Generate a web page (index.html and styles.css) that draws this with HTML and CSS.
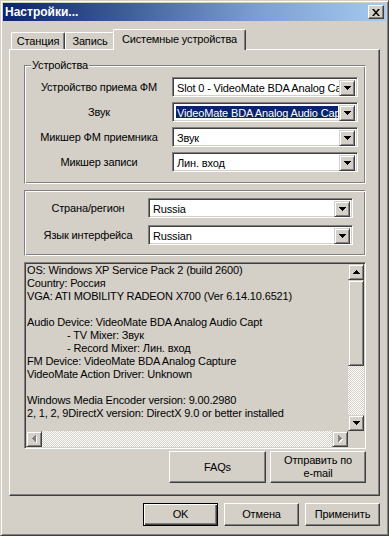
FILE: index.html
```html
<!DOCTYPE html>
<html lang="ru">
<head>
  <meta charset="UTF-8">
  <meta name="viewport" content="width=device-width, initial-scale=1.0">
  <title>Настройки...</title>
  <link rel="stylesheet" href="styles.css">
</head>
<body>

  <div class="window">
    <div class="titlebar">
      <span class="title">Настройки...</span>
      <button class="close" type="button">
        <svg width="8" height="7" viewBox="0 0 8 7"><path d="M0 0h2l2 2.5L6 0h2L5 3.5 8 7H6L4 4.5 2 7H0l3-3.5z" fill="#000"/></svg>
      </button>
    </div>

    <div class="client">
      <div class="tabs">
        <div class="tab tab-station">Станция</div>
        <div class="tab tab-record">Запись</div>
        <div class="tab tab-system active">Системные устройства</div>
      </div>

      <div class="panel">
        <!-- Devices -->
        <div class="group devices">
          <span class="legend">Устройства</span>
          <div class="row">
            <label>Устройство приема ФМ</label>
            <div class="combo"><span class="value">Slot 0 - VideoMate BDA Analog Capture</span><span class="drop"><svg width="7" height="4" viewBox="0 0 7 4"><path d="M0 0h7v1H6v1H5v1H4v1H3V3H2V2H1V1H0z"/></svg></span></div>
          </div>
          <div class="row">
            <label>Звук</label>
            <div class="combo"><span class="value"><span class="selected">VideoMate BDA Analog Audio Capture</span></span><span class="drop"><svg width="7" height="4" viewBox="0 0 7 4"><path d="M0 0h7v1H6v1H5v1H4v1H3V3H2V2H1V1H0z"/></svg></span></div>
          </div>
          <div class="row">
            <label>Микшер ФМ приемника</label>
            <div class="combo"><span class="value">Звук</span><span class="drop"><svg width="7" height="4" viewBox="0 0 7 4"><path d="M0 0h7v1H6v1H5v1H4v1H3V3H2V2H1V1H0z"/></svg></span></div>
          </div>
          <div class="row">
            <label>Микшер записи</label>
            <div class="combo"><span class="value">Лин. вход</span><span class="drop"><svg width="7" height="4" viewBox="0 0 7 4"><path d="M0 0h7v1H6v1H5v1H4v1H3V3H2V2H1V1H0z"/></svg></span></div>
          </div>
        </div>

        <!-- Region -->
        <div class="group region">
          <div class="row">
            <label>Страна/регион</label>
            <div class="combo"><span class="value">Russia</span><span class="drop"><svg width="7" height="4" viewBox="0 0 7 4"><path d="M0 0h7v1H6v1H5v1H4v1H3V3H2V2H1V1H0z"/></svg></span></div>
          </div>
          <div class="row">
            <label>Язык интерфейса</label>
            <div class="combo"><span class="value">Russian</span><span class="drop"><svg width="7" height="4" viewBox="0 0 7 4"><path d="M0 0h7v1H6v1H5v1H4v1H3V3H2V2H1V1H0z"/></svg></span></div>
          </div>
        </div>

        <!-- System info -->
        <div class="info">
          <div class="info-text">
            <div>OS: Windows XP Service Pack 2 (build 2600)</div>
            <div>Country: Россия</div>
            <div>VGA: ATI MOBILITY RADEON X700 (Ver 6.14.10.6521)</div>
            <div>&nbsp;</div>
            <div>Audio Device: VideoMate BDA Analog Audio Capt</div>
            <div class="indent">- TV Mixer: Звук</div>
            <div class="indent">- Record Mixer: Лин. вход</div>
            <div>FM Device: VideoMate BDA Analog Capture</div>
            <div>VideoMate Action Driver: Unknown</div>
            <div>&nbsp;</div>
            <div>Windows Media Encoder version: 9.00.2980</div>
            <div>2, 1, 2, 9DirectX version: DirectX 9.0 or better installed</div>
          </div>
          <div class="vscroll">
            <span class="sb-btn"><svg width="7" height="4" viewBox="0 0 7 4"><path d="M3 0h1v1h1v1h1v1h1v1H0V3h1V2h1V1h1z"/></svg></span>
            <span class="sb-thumb"></span>
            <span class="sb-track"></span>
            <span class="sb-btn"><svg width="7" height="4" viewBox="0 0 7 4"><path d="M0 0h7v1H6v1H5v1H4v1H3V3H2V2H1V1H0z"/></svg></span>
          </div>
          <div class="hscroll">
            <span class="sb-btn disabled"><svg width="5" height="8" viewBox="0 0 5 8"><path d="M4 1h1v7H4V7H3V6H2V5H1V4h1V3h1V2h1z" fill="#fff"/><path d="M3 0h1v7H3V6H2V5H1V4H0V3h1V2h1V1h1z" fill="#808080"/></svg></span>
            <span class="sb-track"></span>
            <span class="sb-btn disabled"><svg width="5" height="8" viewBox="0 0 5 8"><path d="M1 1h1v1h1v1h1v1h1v1H4v1H3v1H2v1H1z" fill="#fff"/><path d="M0 0h1v1h1v1h1v1h1v1H3v1H2v1H1v1H0z" fill="#808080"/></svg></span>
          </div>
          <div class="corner"></div>
        </div>

        <div class="actions">
          <button class="btn faq" type="button">FAQs</button>
          <button class="btn mail" type="button">Отправить по<br>e-mail</button>
        </div>
      </div>

      <div class="buttons">
        <button class="btn default" type="button">OK</button>
        <button class="btn" type="button">Отмена</button>
        <button class="btn" type="button">Применить</button>
      </div>
    </div>
  </div>

</body>
</html>
```

FILE: styles.css
```css
/* General Styles */
* {
  margin: 0;
  padding: 0;
  box-sizing: border-box;
}

body {
  background-color: #d4d0c8;
  font-family: "Liberation Sans", Arial, sans-serif;
  font-size: 11px;
  letter-spacing: -0.15px;
  color: #000;
}

button {
  font-family: inherit;
  font-size: 11px;
  letter-spacing: inherit;
  color: #000;
  background-color: #d4d0c8;
}

/* Window frame */
.window {
  width: 389px;
  height: 536px;
  border: 1px solid;
  border-color: #d4d0c8 #404040 #404040 #d4d0c8;
  box-shadow: inset 1px 1px #fff, inset -1px -1px #808080;
  padding: 2px;
  display: flex;
  flex-direction: column;
}

.titlebar {
  height: 18px;
  display: flex;
  align-items: center;
  justify-content: space-between;
  padding: 0 2px;
  background: linear-gradient(to right, #0a246a 0%, #3a5a94 30%, #7b9cd0 65%, #a6caf0 100%);
}

.title {
  color: #fff;
  font-weight: bold;
  font-size: 12px;
  letter-spacing: 0;
}

.close {
  width: 16px;
  height: 14px;
  display: flex;
  align-items: center;
  justify-content: center;
  border: 1px solid;
  border-color: #fff #404040 #404040 #fff;
  box-shadow: inset -1px -1px #808080;
}

.client {
  flex: 1;
  display: flex;
  flex-direction: column;
  padding: 8px 6px 7px 6px;
}

/* Tabs */
.tabs {
  height: 20px;
  display: flex;
  align-items: flex-end;
  padding-left: 2px;
  position: relative;
  z-index: 1;
}

.tab {
  height: 17px;
  display: flex;
  align-items: center;
  justify-content: center;
  white-space: nowrap;
  background-color: #d4d0c8;
  border-top: 1px solid #fff;
  border-left: 1px solid #fff;
  border-right: 1px solid #404040;
  border-radius: 2px 2px 0 0;
  box-shadow: inset -1px 0 #808080;
}

.tab-station { width: 54px; }
.tab-record { width: 50px; }

.tab.active {
  width: 133px;
  height: 21px;
  margin: 0 -2px -1px -2px;
  padding-bottom: 2px;
}

/* Tab page */
.panel {
  height: 447px;
  border-top: 1px solid #fff;
  border-left: 1px solid #fff;
  border-right: 1px solid #404040;
  border-bottom: 1px solid #404040;
  box-shadow: inset -1px -1px #808080;
  padding: 15px 13px 0 14px;
  display: flex;
  flex-direction: column;
}

.group {
  position: relative;
  border: 1px solid;
  border-color: #808080 #fff #fff #808080;
  box-shadow: inset 1px 1px #fff, inset -1px -1px #808080;
  display: flex;
  flex-direction: column;
}

.legend {
  position: absolute;
  top: -7px;
  left: 6px;
  padding: 0 1px;
  line-height: 13px;
  background-color: #d4d0c8;
}

.devices {
  height: 119px;
  padding: 11px 0 0 5px;
  gap: 5px;
}

.devices .row {
  grid-template-columns: 138px 186px;
  column-gap: 4px;
}

.region {
  height: 66px;
  margin-top: 6px;
  padding: 7px 0 0 5px;
  gap: 7px;
}

.region .row {
  grid-template-columns: 116px 205px;
  column-gap: 2px;
}

.row {
  display: grid;
  height: 20px;
}

.row label {
  line-height: 20px;
  text-align: center;
  white-space: nowrap;
}

/* Combo box */
.combo {
  display: flex;
  height: 20px;
  padding: 2px;
  background-color: #fff;
  border: 1px solid;
  border-color: #808080 #fff #fff #808080;
  box-shadow: inset 1px 1px #404040, inset -1px -1px #d4d0c8;
}

.combo .value {
  flex: 1;
  display: flex;
  overflow: hidden;
  white-space: nowrap;
  line-height: 16px;
  padding-left: 2px;
}

.combo .selected {
  flex: 1;
  margin: 1px 1px 1px -1px;
  padding-left: 1px;
  line-height: 14px;
  background-color: #0a246a;
  color: #fff;
  overflow: hidden;
}

.drop,
.sb-btn {
  width: 16px;
  height: 16px;
  flex-shrink: 0;
  display: flex;
  align-items: center;
  justify-content: center;
  background-color: #d4d0c8;
  border: 1px solid;
  border-color: #d4d0c8 #404040 #404040 #d4d0c8;
  box-shadow: inset 1px 1px #fff, inset -1px -1px #808080;
}

/* Info box */
.info {
  height: 187px;
  margin-top: 6px;
  display: grid;
  grid-template-columns: 1fr 16px;
  grid-template-rows: 1fr 16px;
  border: 1px solid;
  border-color: #808080 #fff #fff #808080;
  box-shadow: inset 1px 1px #404040, inset -1px -1px #d4d0c8;
  padding: 1px;
}

.info-text {
  overflow: hidden;
  white-space: nowrap;
  line-height: 13px;
  padding-left: 1px;
}

.info-text .indent {
  padding-left: 40px;
}

.vscroll {
  display: flex;
  flex-direction: column;
}

.hscroll {
  display: flex;
}

.sb-thumb {
  height: 86px;
  background-color: #d4d0c8;
  border: 1px solid;
  border-color: #d4d0c8 #404040 #404040 #d4d0c8;
  box-shadow: inset 1px 1px #fff, inset -1px -1px #808080;
}

.sb-track {
  flex: 1;
  background: repeating-conic-gradient(#fff 0 25%, #d4d0c8 0 50%) 0 0 / 2px 2px;
}

.corner {
  background-color: #d4d0c8;
}

.actions {
  margin-top: 2px;
  display: flex;
  justify-content: flex-end;
  gap: 4px;
}

/* Buttons */
.btn {
  height: 23px;
  width: 75px;
  border: 1px solid;
  border-color: #fff #404040 #404040 #fff;
  box-shadow: inset -1px -1px #808080;
  line-height: 13px;
}

.btn.faq {
  width: 97px;
  height: 32px;
}

.btn.mail {
  width: 96px;
  height: 32px;
}

.btn.default {
  border: 1px solid #000;
  box-shadow: inset 1px 1px #fff, inset -1px -1px #404040, inset -2px -2px #808080;
}

.buttons {
  margin-top: 7px;
  display: flex;
  justify-content: flex-end;
  gap: 6px;
}
```
